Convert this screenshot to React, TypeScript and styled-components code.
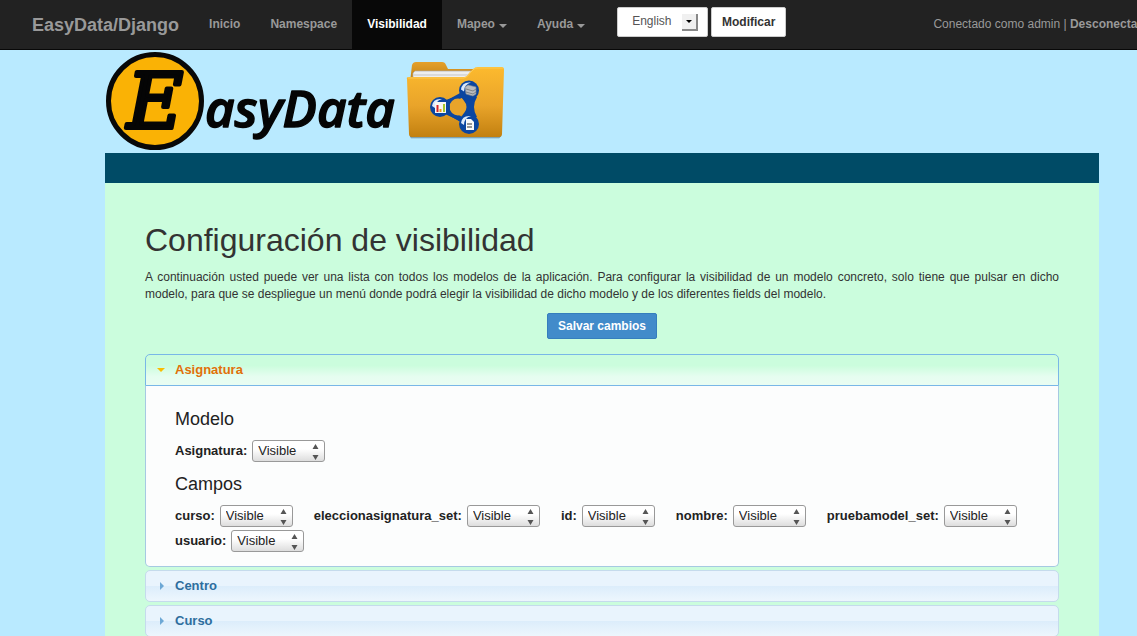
import React, { useState } from "react";
import styled, { createGlobalStyle } from "styled-components";

const GlobalStyle = createGlobalStyle`
  *, *::before, *::after { box-sizing: border-box; }
  html { background: #b9eaff; }
  body {
    margin: 0;
    overflow-x: hidden;
    background: #b9eaff;
    color: #333;
    font: 12px/17px "Liberation Sans", Arial, sans-serif;
  }
`;

const Navbar = styled.nav`
  display: flex;
  align-items: center;
  height: 50px;
  padding-left: 32px;
  background: #222;
  border-bottom: 1px solid #080808;
  color: #999;
  white-space: nowrap;
  overflow: hidden;
`;

const Brand = styled.a`
  margin-right: 15px;
  color: #999;
  font-size: 18px;
  font-weight: bold;
  line-height: 20px;
  text-decoration: none;
`;

const NavItem = styled.a<{ $active?: boolean }>`
  display: flex;
  align-items: center;
  gap: 4px;
  height: 49px;
  padding: 0 15px;
  background: ${(p) => (p.$active ? "#080808" : "transparent")};
  color: ${(p) => (p.$active ? "#fff" : "#999")};
  font-weight: bold;
  text-decoration: none;
`;

const Caret = styled.span`
  margin-top: 2px;
  border: 4px solid transparent;
  border-top-color: currentColor;
  border-bottom: 0;
`;

const LanguageForm = styled.form`
  display: flex;
  gap: 3px;
  margin: 0 16px 6px 17px;
`;

const LanguageBox = styled.span`
  position: relative;
  display: flex;
  height: 30px;
  background: #fff;
  border: 1px solid #ccc;
  border-radius: 2px;
`;

const LanguageSelect = styled.select`
  appearance: none;
  width: 89px;
  padding: 0 30px 2px 14px;
  border: 0;
  background: transparent;
  color: #555;
  font: 12px "Liberation Sans", Arial, sans-serif;
`;

const DropButton = styled.span`
  position: absolute;
  top: 6px;
  right: 9px;
  display: grid;
  place-items: center;
  width: 16px;
  height: 17px;
  background: #f0f0f0;
  border: solid #888;
  border-width: 0 2px 2px 0;
  pointer-events: none;
`;

const DropArrow = styled.span`
  border: 3px solid transparent;
  border-top-color: #000;
  border-bottom: 0;
`;

const SubmitButton = styled.button`
  width: 75px;
  height: 30px;
  padding: 0;
  background: #fff;
  border: 1px solid #ccc;
  border-radius: 2px;
  color: #333;
  font: bold 12px "Liberation Sans", Arial, sans-serif;
`;

const Session = styled.div`
  flex: none;
  margin: 0 -5px 0 auto;

  a {
    color: #999;
    font-weight: bold;
    text-decoration: none;
  }
`;

const Page = styled.div`
  margin: 0 38px 0 105px;
`;

const LogoLink = styled.a`
  display: block;
  height: 103px;

  svg { display: block; }
`;

const Strip = styled.div`
  height: 30px;
  background: #004b66;
`;

const Content = styled.main`
  padding: 37px 40px 40px;
  background: #cbfddd;
`;

const Title = styled.h1`
  margin: 0 0 9px;
  font-size: 32px;
  font-weight: normal;
  line-height: 40px;
`;

const Intro = styled.p`
  margin: 0 0 10px;
  text-align: justify;
`;

const Actions = styled.div`
  display: flex;
  justify-content: center;
  margin-bottom: 15px;
`;

const SaveButton = styled.button`
  height: 26px;
  padding: 0 10px;
  background: #428bca;
  border: 1px solid #357ebd;
  border-radius: 2px;
  color: #fff;
  font: bold 12px "Liberation Sans", Arial, sans-serif;
`;

const Accordion = styled.div`
  display: grid;
  gap: 3px;
  font-size: 13px;
`;

const SectionHeader = styled.button<{ $open: boolean }>`
  display: flex;
  align-items: center;
  width: 100%;
  height: 32px;
  padding: 0 11px 2px;
  border: 1px solid ${(p) => (p.$open ? "#79b7e7" : "#c5dbec")};
  border-radius: ${(p) => (p.$open ? "5px 5px 0 0" : "5px")};
  background: ${(p) =>
    p.$open
      ? "linear-gradient(#cbfddd 35%, #e6fdf0 72%, #e9fdf2)"
      : "linear-gradient(#e9f4fd 50%, #dcedfb 51%, #edf6fd)"};
  color: ${(p) => (p.$open ? "#e17009" : "#2e6e9e")};
  font: bold 13px "Liberation Sans", Arial, sans-serif;
`;

const Marker = styled.span<{ $open: boolean }>`
  display: flex;
  width: 18px;
  padding-top: 1px;
  padding-left: ${(p) => (p.$open ? "0" : "3px")};

  &::before {
    content: "";
    border: 4px solid transparent;
    ${(p) =>
      p.$open
        ? "border-top-color: #f9bd01; border-bottom: 0;"
        : "border-left-color: #6da8d5; border-right: 0;"}
  }
`;

const Panel = styled.div`
  padding: 22px 29px 3px;
  border: 1px solid #a6c9e2;
  border-top: 0;
  border-radius: 0 0 5px 5px;
  background: #fcfdfd;
  color: #222;
`;

const GroupTitle = styled.h2`
  margin: 0 0 10px;
  font-size: 18px;
  font-weight: normal;
  line-height: 22px;
`;

const Fields = styled.div`
  display: flex;
  flex-wrap: wrap;
  gap: 3px 21px;
  margin-bottom: 11px;
`;

const FieldLabel = styled.label`
  display: flex;
  align-items: center;
  gap: 5px;
  font-weight: bold;
  line-height: 22px;
`;

const SelectBox = styled.span`
  position: relative;
  display: flex;

  svg {
    position: absolute;
    top: 4px;
    right: 6px;
    pointer-events: none;
  }
`;

const VisibilitySelect = styled.select`
  appearance: none;
  width: 73px;
  height: 22px;
  padding: 0 18px 2px 5px;
  border: 1px solid #999;
  border-radius: 3px;
  background: linear-gradient(#fff 40%, #ddd);
  color: #222;
  font: 13px "Liberation Sans", Arial, sans-serif;
`;

function Logo() {
  return (
    <svg width="400" height="103" viewBox="105 50 400 103" role="img" aria-label="EasyData">
      <defs>
        <linearGradient id="front" x1="0" y1="0" x2="0" y2="1">
          <stop offset="0" stopColor="#fcba2e" />
          <stop offset="0.55" stopColor="#e9a42a" />
          <stop offset="1" stopColor="#c28010" />
        </linearGradient>
        <linearGradient id="back" x1="0" y1="0" x2="0" y2="1">
          <stop offset="0" stopColor="#e5a02a" />
          <stop offset="1" stopColor="#bd7d12" />
        </linearGradient>
        <linearGradient id="ground" x1="0" y1="0" x2="0" y2="1">
          <stop offset="0" stopColor="#445c66" />
          <stop offset="1" stopColor="#b9eaff" />
        </linearGradient>
      </defs>
      <circle cx="155" cy="101" r="46.500" fill="#fab205" stroke="#080808" strokeWidth="5" />
      <g fill="#050505" stroke="#050505" strokeLinejoin="round">
        <text x="127" y="128" fontFamily="DejaVu Serif, serif" fontStyle="italic" fontSize="77" strokeWidth="4">E</text>
        <text x="205" y="127" fontFamily="Open Sans, sans-serif" fontStyle="italic" fontWeight="600" fontSize="51" strokeWidth="1.500">asyData</text>
      </g>
      <path d="M410 136H501L499 139H411Z" fill="url(#ground)" />
      <path d="M410 82L412 65Q413 62 416 62H442Q445 62 446 65L448 69H490V82Z" fill="url(#back)" />
      <path d="M413 73L415 71H475L470 79H413Z" fill="#eee" stroke="#aaa" strokeWidth="0.700" />
      <path d="M414 75H472" stroke="#c5c5c5" />
      <path d="M407 79Q406 77 409 77H464Q467 77 469 73L473 69Q475 67 478 67H502Q504 67 504 70L502 134Q502 137 499 137H412Q409 137 409 134Z" fill="url(#front)" />
      <path d="M408 78H464Q468 77 470 73L474 69Q475 68 478 68H503" fill="none" stroke="#ffd05c" strokeWidth="0.800" />
      <g fill="#0b46a0">
        <path d="M440 107L469 91V124Z" fill="none" stroke="#0b46a0" strokeWidth="5" strokeLinejoin="round" />
        <path d="M446 100L460 95L451 106L460 121L445 114Z" />
        <path d="M461 97H477Q471 107 477 117H461Q470 107 461 97Z" />
      </g>
      <circle cx="458" cy="107" r="8.500" fill="#e9a42a" />
      {[[440, 107], [469, 90.5], [469, 124]].map(([cx, cy]) => (
        <g key={cy}>
          <circle cx={cx} cy={cy} r="10" fill="#0b46a0" />
          <path d={`M${cx - 8} ${cy - 1}Q${cx - 7} ${cy - 9} ${cx + 2} ${cy - 8}Q${cx - 5} ${cy - 6} ${cx - 5} ${cy + 1}Z`} fill="#dce9fb" />
        </g>
      ))}
      <path d="M435 102H446V113H435Z" fill="#f7f7f2" />
      <path d="M437.500 105V112" stroke="#d82626" strokeWidth="2" />
      <path d="M440.500 109V112" stroke="#ef9b18" strokeWidth="2" />
      <path d="M444 104V112" stroke="#a4c82a" strokeWidth="2" />
      <path d="M465 87L468 85L476 87V94L473 96L466 94Z" fill="#b9bcc0" stroke="#85898e" strokeWidth="0.600" />
      <path d="M466 89L473 91L476 89M466 92L473 94L476 92" fill="none" stroke="#6f7378" strokeWidth="0.800" />
      <path d="M466 119H471L474 122V130H466Z" fill="#fafafa" />
      <path d="M467 124H472M467 127H472" stroke="#333" strokeWidth="1.200" />
    </svg>
  );
}

function VisibilityField({ name }: { name: string }) {
  return (
    <FieldLabel>
      {name}:
      <SelectBox>
        <VisibilitySelect defaultValue="visible">
          <option value="visible">Visible</option>
          <option value="oculto">Oculto</option>
        </VisibilitySelect>
        <svg width="7" height="16" viewBox="0 0 7 16" fill="#555" aria-hidden="true">
          <path d="M0.500 5L3.500 0L6.500 5ZM0.500 11H6.500L3.500 16Z" />
        </svg>
      </SelectBox>
    </FieldLabel>
  );
}

const links = [
  { text: "Inicio" },
  { text: "Namespace" },
  { text: "Visibilidad", active: true },
  { text: "Mapeo", menu: true },
  { text: "Ayuda", menu: true },
];

const sections = [
  {
    name: "Asignatura",
    fields: ["curso", "eleccionasignatura_set", "id", "nombre", "pruebamodel_set", "usuario"],
  },
  { name: "Centro", fields: [] },
  { name: "Curso", fields: [] },
];

export default function App() {
  const [open, setOpen] = useState("Asignatura");

  return (
    <>
      <GlobalStyle />
      <Navbar>
        <Brand href="#">EasyData/Django</Brand>
        {links.map((link) => (
          <NavItem key={link.text} href="#" $active={link.active}>
            {link.text}
            {link.menu && <Caret />}
          </NavItem>
        ))}
        <LanguageForm onSubmit={(e) => e.preventDefault()}>
          <LanguageBox>
            <LanguageSelect aria-label="Idioma" defaultValue="en">
              <option value="en">English</option>
              <option value="es">Español</option>
            </LanguageSelect>
            <DropButton><DropArrow /></DropButton>
          </LanguageBox>
          <SubmitButton type="submit">Modificar</SubmitButton>
        </LanguageForm>
        <Session>
          Conectado como admin | <a href="#">Desconectar</a>
        </Session>
      </Navbar>
      <Page>
        <LogoLink href="#"><Logo /></LogoLink>
        <Strip />
        <Content>
          <Title>Configuración de visibilidad</Title>
          <Intro>
            A continuación usted puede ver una lista con todos los modelos de la aplicación. Para
            configurar la visibilidad de un modelo concreto, solo tiene que pulsar en dicho modelo,
            para que se despliegue un menú donde podrá elegir la visibilidad de dicho modelo y de
            los diferentes fields del modelo.
          </Intro>
          <Actions>
            <SaveButton type="button">Salvar cambios</SaveButton>
          </Actions>
          <Accordion>
            {sections.map(({ name, fields }) => (
              <section key={name}>
                <SectionHeader
                  type="button"
                  $open={open === name}
                  aria-expanded={open === name}
                  onClick={() => setOpen(open === name ? "" : name)}
                >
                  <Marker $open={open === name} />
                  {name}
                </SectionHeader>
                {open === name && (
                  <Panel>
                    <GroupTitle>Modelo</GroupTitle>
                    <Fields><VisibilityField name={name} /></Fields>
                    <GroupTitle>Campos</GroupTitle>
                    <Fields>
                      {fields.map((field) => <VisibilityField key={field} name={field} />)}
                    </Fields>
                  </Panel>
                )}
              </section>
            ))}
          </Accordion>
        </Content>
      </Page>
    </>
  );
}
